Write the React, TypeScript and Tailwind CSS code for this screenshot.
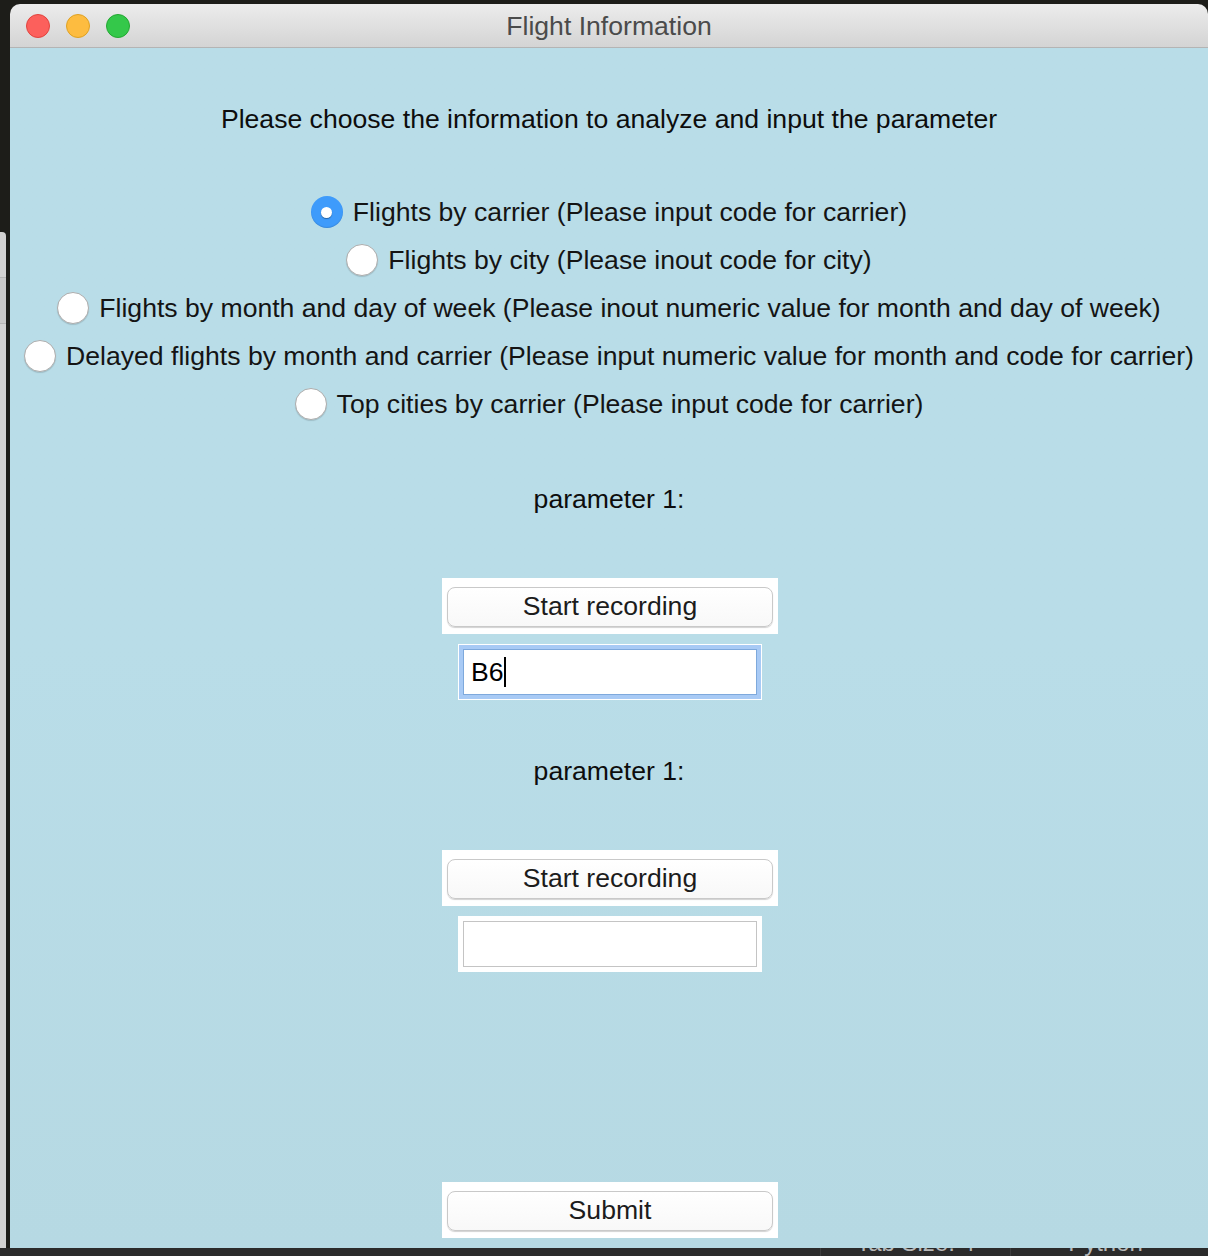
import React from "react";

const font = { fontFamily: '"Liberation Sans", Arial, Helvetica, sans-serif' };

function Radio({ checked, label }: { checked?: boolean; label: string }) {
  return (
    <div className="flex h-[48px] items-center justify-center gap-[10px]">
      {checked ? (
        <div className="flex h-[32px] w-[32px] items-center justify-center rounded-full bg-[#3e9bfb] shadow-[inset_0_-1px_1px_rgba(0,0,0,0.12)]">
          <div className="h-[11px] w-[11px] rounded-full bg-white shadow-[0_1px_1px_rgba(0,0,0,0.35)]" />
        </div>
      ) : (
        <div className="h-[32px] w-[32px] rounded-full border border-[#adadad] bg-white shadow-[0_1px_1px_rgba(0,0,0,0.15)]" />
      )}
      <span className="text-[26.6px] leading-[30px] text-[#141414]">{label}</span>
    </div>
  );
}

function ButtonBox({ label }: { label: string }) {
  return (
    <div className="w-[336px] bg-white px-[5px] pb-[7px] pt-[9px]">
      <div className="flex h-[40px] items-center justify-center rounded-[8px] border border-[#c9c9c9] bg-gradient-to-b from-white to-[#f8f8f8] text-[26.6px] text-[#1c1c1c] shadow-[0_1px_1px_rgba(0,0,0,0.18)]">
        {label}
      </div>
    </div>
  );
}

function InputBox({ value, focused }: { value?: string; focused?: boolean }) {
  return (
    <div className="w-[304px] bg-white p-[5px]">
      <div
        className={
          focused
            ? "flex h-[46px] w-[294px] items-center border border-[#7ea9dc] bg-white pl-[7px] shadow-[0_0_0_4px_#a8caf5]"
            : "flex h-[46px] w-[294px] items-center border border-[#c4c4c4] bg-white pl-[7px]"
        }
      >
        {value ? (
          <>
            <span className="text-[26.6px] leading-[30px] text-black">{value}</span>
            <span className="h-[30px] w-[2px] bg-black" />
          </>
        ) : null}
      </div>
    </div>
  );
}

export default function App() {
  return (
    <div className="flex h-[1256px] w-[1208px] flex-col overflow-hidden bg-[#1d1d19]" style={font}>
      <div className="flex h-[1248px] w-full">
        {/* left strip: window behind */}
        <div className="flex w-[10px] flex-col">
          <div className="h-[232px]" />
          <div className="flex w-[6px] flex-1 flex-col rounded-tr-[4px] bg-[#d2d2d2]">
            <div className="h-[46px] border-b border-[#b5b5b5]" />
            <div className="h-[46px] border-b border-[#b5b5b5] bg-[#c9c9c9]" />
          </div>
        </div>

        {/* window */}
        <div className="mt-[4px] flex flex-1 flex-col overflow-hidden rounded-t-[10px]">
          {/* title bar */}
          <div className="grid h-[44px] grid-cols-[1fr_auto_1fr] items-center border-b border-[#b4b4b4] bg-gradient-to-b from-[#ececec] to-[#d4d4d4]">
            <div className="flex items-center gap-[16px] pl-[16px]">
              <div className="h-[24px] w-[24px] rounded-full border border-[#e0443e] bg-[#fc605c]" />
              <div className="h-[24px] w-[24px] rounded-full border border-[#dea123] bg-[#fdbc40]" />
              <div className="h-[24px] w-[24px] rounded-full border border-[#24a732] bg-[#34c84a]" />
            </div>
            <div className="text-[26.6px] leading-[30px] text-[#4b4b4b]">Flight Information</div>
            <div />
          </div>

          {/* content */}
          <div className="flex flex-1 flex-col items-center bg-gradient-to-b from-[#b9dde8] via-[#b9dde8] to-[#b6d9e3]">
            <div className="mt-[56px] text-[26.6px] leading-[30px] text-[#0d0d0d]">
              Please choose the information to analyze and input the parameter
            </div>

            <div className="mt-[54px] flex flex-col items-center">
              <Radio checked label="Flights by carrier (Please input code for carrier)" />
              <Radio label="Flights by city (Please inout code for city)" />
              <Radio label="Flights by month and day of week (Please inout numeric value for month and day of week)" />
              <Radio label="Delayed flights by month and carrier (Please input numeric value for month and code for carrier)" />
              <Radio label="Top cities by carrier (Please input code for carrier)" />
            </div>

            <div className="mt-[56px] text-[26.6px] leading-[30px] text-[#0d0d0d]">parameter 1:</div>
            <div className="mt-[64px] pl-[2px]">
              <ButtonBox label="Start recording" />
            </div>
            <div className="mt-[10px] pl-[2px]">
              <InputBox value="B6" focused />
            </div>

            <div className="mt-[56px] text-[26.6px] leading-[30px] text-[#0d0d0d]">parameter 1:</div>
            <div className="mt-[64px] pl-[2px]">
              <ButtonBox label="Start recording" />
            </div>
            <div className="mt-[10px] pl-[2px]">
              <InputBox />
            </div>

            <div className="mt-[210px] pl-[2px]">
              <ButtonBox label="Submit" />
            </div>
          </div>
        </div>
      </div>

      {/* bottom strip: editor status bar behind */}
      <div className="flex h-[8px] w-full overflow-hidden bg-[#2b2b2b]">
        <div className="w-[820px]" />
        <div className="flex h-[30px] w-[190px] -translate-y-[20px] items-center justify-center border-l border-[#3d3d3d] text-[24px] text-[#b8b8b8]">
          Tab Size: 4
        </div>
        <div className="flex h-[30px] w-[190px] -translate-y-[20px] items-center justify-center border-l border-[#3d3d3d] text-[24px] text-[#b8b8b8]">
          Python
        </div>
      </div>
    </div>
  );
}
